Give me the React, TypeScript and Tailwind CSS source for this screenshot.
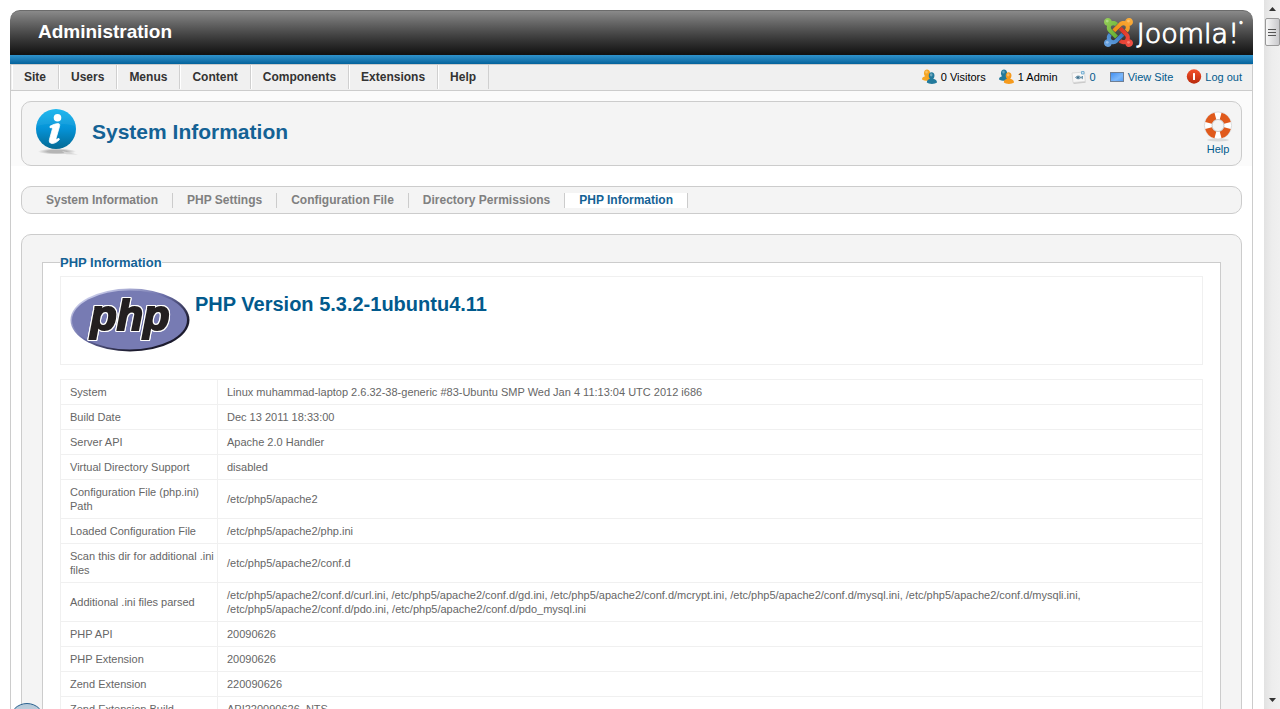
import type { ReactNode } from 'react'

const menuItems = ['Site', 'Users', 'Menus', 'Content', 'Components', 'Extensions', 'Help']

const tabs = [
  'System Information',
  'PHP Settings',
  'Configuration File',
  'Directory Permissions',
  'PHP Information',
]

const phpInfo = [
  ['System', 'Linux muhammad-laptop 2.6.32-38-generic #83-Ubuntu SMP Wed Jan 4 11:13:04 UTC 2012 i686'],
  ['Build Date', 'Dec 13 2011 18:33:00'],
  ['Server API', 'Apache 2.0 Handler'],
  ['Virtual Directory Support', 'disabled'],
  ['Configuration File (php.ini) Path', '/etc/php5/apache2'],
  ['Loaded Configuration File', '/etc/php5/apache2/php.ini'],
  ['Scan this dir for additional .ini files', '/etc/php5/apache2/conf.d'],
  [
    'Additional .ini files parsed',
    '/etc/php5/apache2/conf.d/curl.ini, /etc/php5/apache2/conf.d/gd.ini, /etc/php5/apache2/conf.d/mcrypt.ini, /etc/php5/apache2/conf.d/mysql.ini, /etc/php5/apache2/conf.d/mysqli.ini, /etc/php5/apache2/conf.d/pdo.ini, /etc/php5/apache2/conf.d/pdo_mysql.ini',
  ],
  ['PHP API', '20090626'],
  ['PHP Extension', '20090626'],
  ['Zend Extension', '220090626'],
  ['Zend Extension Build', 'API220090626, NTS'],
]

function JoomlaMark() {
  return (
    <svg viewBox="0 32 448 448" className="size-[29px]" aria-hidden="true">
      <defs>
        <linearGradient id="jGreen" x1="0" y1="0" x2="1" y2="1">
          <stop offset="0" stopColor="#9ad05c" />
          <stop offset="1" stopColor="#5fae2e" />
        </linearGradient>
        <linearGradient id="jOrange" x1="1" y1="0" x2="0" y2="1">
          <stop offset="0" stopColor="#fbb040" />
          <stop offset="1" stopColor="#f08a10" />
        </linearGradient>
        <linearGradient id="jRed" x1="0" y1="0" x2="1" y2="1">
          <stop offset="0" stopColor="#d9301f" />
          <stop offset="1" stopColor="#f4554a" />
        </linearGradient>
        <linearGradient id="jBlue" x1="1" y1="0" x2="0" y2="1">
          <stop offset="0" stopColor="#2f74bd" />
          <stop offset="1" stopColor="#6fa8e4" />
        </linearGradient>
      </defs>
      <path
        fill="url(#jBlue)"
        d="M312.1 307.6l-44-44.3c-87 86.4-50.4 50.4-99.7 99.8-14.3 14.3-37.6 14.3-51.9 0-13.1-13.4-16.9-35.3 3.2-55.4l-44-44.3c-30.2 30.2-38 65.2-29.5 98.3-26.7 6-46.2 29.9-46.2 58.2C0 453.2 26.8 480 59.8 480c28.6 0 52.5-19.8 58.6-46.7 32.7 8.2 68.5-.6 94.2-26 32.1-32 12.2-12.4 99.5-99.7z"
      />
      <path
        fill="url(#jRed)"
        d="M396.4 360.7c8.2-32.7-.9-68.5-26.3-93.9-11.8-12.2 5 4.7-99.5-99.7l-44.3 44.3 99.7 99.7c14.3 14.3 14.3 37.6 0 51.9-12.8 12.8-35 17-55.4-3.5l-44 44.3c27.6 30.2 68 38.8 102.7 28 5.5 27.4 29.7 48.1 58.9 48.1 33 0 59.8-26.8 59.8-60.1 0-30.2-22.5-55-51.6-59.1z"
      />
      <path
        fill="url(#jOrange)"
        d="M130.1 208.5l44.3 44.3c10-10 89.7-89.7 99.7-99.8 14.3-14.3 37.6-14.3 51.9 0 12.8 12.8 17 35-3.5 55.4l44 44.3c31.2-31.2 38.5-67.6 28.9-101.2 29.2-4.1 51.9-29.2 51.9-59.5 0-33.2-26.8-60.1-59.8-60.1-30.3 0-55.4 22.5-59.5 51.6-33.8-9.9-71.7-1.5-98.3 25.1-18.3 19.1-71.1 71.5-99.6 99.9z"
      />
      <path
        fill="url(#jGreen)"
        d="M.6 92.1C.6 58.8 27.4 32 60.4 32c30 0 54.5 21.9 59.2 50.2 32.6-7.6 67.1.6 96.5 30l-44.3 44.3c-20.5-20.5-42.6-16.3-55.4-3.5-14.3 14.3-14.3 37.9 0 52.2l99.5 99.5-44 44.3c-87.7-87.2-49.7-49.7-99.8-99.7-26.8-26.5-35-64.8-24.8-98.9C20.4 144.6.6 120.7.6 92.1z"
      />
      <circle cx="50" cy="80" r="22" fill="#c9ecb0" opacity="0.5" />
      <circle cx="378" cy="80" r="22" fill="#ffdc9c" opacity="0.5" />
      <circle cx="50" cy="408" r="22" fill="#cfe3fa" opacity="0.5" />
      <circle cx="378" cy="408" r="22" fill="#ffb0a8" opacity="0.5" />
    </svg>
  )
}

function UsersIcon({ back, front }: { back: string; front: string }) {
  return (
    <svg viewBox="0 0 16 16" className="size-4" aria-hidden="true">
      <path fill={back} d="M0 10.500C0 8 1.500 7.800 3 7.200 1.200 5.300 1.700.5 5 .5s4 4.800 2.200 6.700C9 8 10 8.500 10 11 8 12.200 2 12.200 0 10.500z" />
      <path fill={front} d="M4.800 13.500c0-2.600 1.600-3 3.200-3.700-2-1.900-1.700-6.500 1.600-6.500s3.700 4.600 1.600 6.500c2.200.7 3.800 1.100 3.800 3.700-2 1.900-8.200 1.900-10.200 0z" />
      <ellipse cx="9.200" cy="5.800" rx="1.300" ry="1.600" fill="#fff" opacity="0.35" />
      <ellipse cx="4.500" cy="3" rx="1.300" ry="1.500" fill="#fff" opacity="0.3" />
    </svg>
  )
}

function MailIcon() {
  return (
    <svg viewBox="0 0 16 16" className="size-4" aria-hidden="true">
      <path d="M2.500 14.200l12-1.200" stroke="#c9c9c9" strokeWidth="1.400" />
      <path d="M1 4l12.500-1 .8 9.500L2 13.500z" fill="#f7f7f7" stroke="#d4d4d4" strokeWidth="0.800" />
      <path d="M4.500 8.500c1.500-2 4-2 5.500 0-1.500 1.800-4 1.800-5.500 0zM10 8.500l1.500-1.500v2.800z" fill="#8fb0c4" stroke="#4f7f9c" strokeWidth="0.700" />
      <circle cx="7" cy="8.500" r="0.900" fill="#33617d" />
      <path d="M10.500 2.500h2.500v2.500h-2.500z" fill="#cfe6f5" stroke="#64a4cc" strokeWidth="0.800" />
    </svg>
  )
}

function ScreenIcon() {
  return (
    <svg viewBox="0 0 16 16" className="size-4" aria-hidden="true">
      <defs>
        <linearGradient id="screen" x1="0" y1="0" x2="1" y2="1">
          <stop offset="0" stopColor="#3f8df0" />
          <stop offset="0.600" stopColor="#7db8fa" />
          <stop offset="1" stopColor="#4e9bf5" />
        </linearGradient>
      </defs>
      <rect x="1.500" y="3.500" width="13" height="9" fill="url(#screen)" stroke="#6f7f94" />
    </svg>
  )
}

function LogoutIcon() {
  return (
    <svg viewBox="0 0 16 16" className="size-4" aria-hidden="true">
      <defs>
        <linearGradient id="logout" x1="0" y1="0" x2="0" y2="1">
          <stop offset="0" stopColor="#f4502a" />
          <stop offset="1" stopColor="#b82a0c" />
        </linearGradient>
      </defs>
      <circle cx="8" cy="7.500" r="7.200" fill="url(#logout)" />
      <rect x="7" y="4" width="2" height="7" rx="0.500" fill="#fff" />
    </svg>
  )
}

function InfoIcon() {
  return (
    <svg viewBox="0 0 48 48" className="size-12 shrink-0" aria-hidden="true">
      <defs>
        <linearGradient id="info" x1="0" y1="0" x2="0" y2="1">
          <stop offset="0" stopColor="#12b4ee" />
          <stop offset="0.500" stopColor="#0592d6" />
          <stop offset="1" stopColor="#046a94" />
        </linearGradient>
        <radialGradient id="infoShade">
          <stop offset="0.500" stopColor="#b5b5b5" />
          <stop offset="1" stopColor="#b5b5b5" stopOpacity="0" />
        </radialGradient>
      </defs>
      <ellipse cx="23" cy="43.500" rx="19" ry="3" fill="url(#infoShade)" />
      <path d="M28 43l16 3.500-12-.3z" fill="#d6d6d6" />
      <circle cx="22" cy="21" r="20" fill="url(#info)" />
      <path d="M3 18a19 19 0 0 1 38 0c-10-3-28-3-38 0z" fill="#fff" opacity="0.060" />
      <circle cx="23.500" cy="9.800" r="3.800" fill="#fff" />
      <path
        fill="#fff"
        stroke="#fff"
        strokeWidth="0.800"
        d="M16 18.200c2.500-1.400 6.500-2.800 8.300-2.600 1.500.2 1.600 1.300 1.200 2.800l-3.300 11.500c-.4 1.400 0 1.700 1 1.200l1.700-.8.500 1.300c-2 2.100-4.700 4-7.300 3.900-2.700-.1-3.200-2-2.600-4.200l2.800-10.100c.4-1.400-.3-1.600-2.300-1.500z"
      />
    </svg>
  )
}

function LifebuoyIcon() {
  return (
    <svg viewBox="0 0 32 32" className="size-8" aria-hidden="true">
      <ellipse cx="16" cy="30" rx="11" ry="1.500" fill="#d9d9d9" />
      <circle cx="16" cy="15.500" r="9.800" fill="none" stroke="#fff" strokeWidth="7.500" />
      <circle cx="16" cy="15.500" r="13.600" fill="none" stroke="#d3d3d3" strokeWidth="0.800" />
      <circle
        cx="16"
        cy="15.500"
        r="9.800"
        fill="none"
        stroke="#e05a1c"
        strokeWidth="7"
        pathLength="80"
        strokeDasharray="13 7"
        strokeDashoffset="-3.500"
      />
      <circle cx="16" cy="15.500" r="6" fill="none" stroke="#b9b9b9" strokeWidth="0.800" />
    </svg>
  )
}

function PhpLogo() {
  return (
    <svg viewBox="0 0 120 66" className="h-[66px] w-[120px] shrink-0" role="img" aria-label="PHP logo">
      <defs>
        <linearGradient id="phpEdge" x1="0" y1="0" x2="1" y2="1">
          <stop offset="0.150" stopColor="#c4c7e6" />
          <stop offset="0.450" stopColor="#6a6ea8" />
          <stop offset="0.750" stopColor="#1c1b2e" />
        </linearGradient>
      </defs>
      <ellipse cx="60" cy="33" rx="59.500" ry="31.500" fill="url(#phpEdge)" />
      <ellipse cx="59.500" cy="33" rx="57.500" ry="29.500" fill="#777bb3" />
      <text
        x="60"
        y="43"
        textAnchor="middle"
        fill="#231f20"
        stroke="#231f20"
        strokeWidth="2"
        className="font-['Liberation_Sans',Arial,sans-serif] text-[43px] font-bold italic [filter:drop-shadow(1px_0_#fff)_drop-shadow(-1px_0_#fff)_drop-shadow(0_1px_#fff)_drop-shadow(0_-1px_#fff)]"
      >
        php
      </text>
    </svg>
  )
}

function StatusItem({ icon, children, href }: { icon: ReactNode; children: ReactNode; href?: string }) {
  if (!href) {
    return (
      <span className="flex items-center gap-[3px] text-black">
        {icon}
        {children}
      </span>
    )
  }
  return (
    <a href={href} className="flex items-center gap-[3px] text-[#025a8d]">
      {icon}
      {children}
    </a>
  )
}

function ScrollBar() {
  return (
    <div className="flex w-4 shrink-0 flex-col items-center bg-linear-to-r from-[#e2e2e2] via-[#ededed] to-[#f0f0f0]">
      <div className="flex h-[18px] items-center">
        <svg viewBox="0 0 7 4" className="h-1 w-[7px]" aria-hidden="true">
          <path d="M0 4L3.500 0 7 4z" fill="#333" />
        </svg>
      </div>
      <div className="flex h-7 w-[15px] flex-col items-center justify-center gap-0.5 rounded-xs border border-[#999] bg-linear-to-r from-[#f7f7f7] to-[#c9c9cc]">
        <span className="h-px w-2 bg-[#555]" />
        <span className="h-px w-2 bg-[#555]" />
        <span className="h-px w-2 bg-[#555]" />
      </div>
      <div className="mt-auto flex h-[18px] items-center">
        <svg viewBox="0 0 7 4" className="h-1 w-[7px]" aria-hidden="true">
          <path d="M0 0h7L3.500 4z" fill="#333" />
        </svg>
      </div>
    </div>
  )
}

export default function App() {
  return (
    <div className="relative flex h-screen overflow-hidden bg-white font-['Liberation_Sans',Arial,sans-serif] text-[11px] leading-[14px] text-[#666]">
      <div className="min-w-0 flex-1 overflow-hidden pt-[10px] pr-[11px] pl-[10px]">
        <header>
          <div className="flex h-[45px] items-center justify-between rounded-t-[10px] border-t border-[#6b6b6b] bg-linear-to-b from-[#8a8a8a] to-[#111] pr-[10px] pb-0.5 pl-7">
            <h1 className="text-[19px] leading-6 font-bold text-white">Administration</h1>
            <div className="flex items-center gap-1 text-white">
              <JoomlaMark />
              <span className="flex items-start pt-[3px] font-['DejaVu_Sans','Inter',sans-serif] text-[27px] leading-7 font-extralight [-webkit-text-stroke:1px_#fff]">
                Joomla!
                <span className="text-[8px] leading-3">°</span>
              </span>
            </div>
          </div>
          <div className="h-[9px] bg-linear-to-b from-[#2f93cc] to-[#02639c]" />
        </header>

        <div className="border-x border-[#ccc]">
          <div className="flex items-center justify-between border-y border-[#ccc] bg-[#f0f0f0] pr-[10px] pb-px">
            <nav className="flex pl-px">
              {menuItems.map(item => (
                <a
                  key={item}
                  href="#"
                  className="border-r border-[#d0d0d0] px-3 py-1 text-xs leading-4 font-bold text-[#333] shadow-[inset_1px_0_#fff]"
                >
                  {item}
                </a>
              ))}
            </nav>
            <div className="flex items-center gap-[13px]">
              <StatusItem icon={<UsersIcon back="#f5a623" front="#237a9c" />}>0 Visitors</StatusItem>
              <StatusItem icon={<UsersIcon back="#237a9c" front="#f59a1c" />}>1 Admin</StatusItem>
              <StatusItem icon={<MailIcon />} href="#">0</StatusItem>
              <StatusItem icon={<ScreenIcon />} href="#">View Site</StatusItem>
              <StatusItem icon={<LogoutIcon />} href="#">Log out</StatusItem>
            </div>
          </div>

          <div className="bg-[#fbfbfb] px-[10px] pt-[10px]">
            <div className="flex items-center justify-between rounded-[10px] border border-[#ccc] bg-[#f4f4f4] pt-1.5 pr-[7px] pb-[9px] pl-3">
              <div className="flex items-center gap-[10px]">
                <InfoIcon />
                <h2 className="text-[21px] leading-6 font-bold text-[#146295]">System Information</h2>
              </div>
              <a href="#" className="flex flex-col items-center pt-0.5 text-[#025a8d]">
                <LifebuoyIcon />
                Help
              </a>
            </div>
          </div>

          <main className="px-[10px] pt-5">
            <nav className="flex rounded-[10px] border border-[#ccc] bg-[#f4f4f4] pt-1.5 pb-[5px] pl-[10px]">
              {tabs.map(tab => (
                <a
                  key={tab}
                  href="#"
                  className={
                    tab === 'PHP Information'
                      ? 'border-r border-[#ccc] bg-white px-[14px] text-xs leading-[15px] font-bold text-[#146295]'
                      : 'border-r border-[#ccc] px-[14px] text-xs leading-[15px] font-bold text-[#808080]'
                  }
                >
                  {tab}
                </a>
              ))}
            </nav>

            <section className="mt-5 rounded-[10px] border border-[#ccc] bg-[#f4f4f4] px-5 pt-[19px] pb-5">
              <fieldset className="border border-[#ccc] bg-white px-[17px] pt-[5px] pb-4">
                <legend className="text-[13px] leading-[17px] font-bold text-[#146295]">PHP Information</legend>
                <div className="flex gap-[5px] border border-[#f0f0f0] px-[9px] pt-[10px] pb-[11px]">
                  <PhpLogo />
                  <h3 className="pt-[5px] text-xl leading-6 font-bold text-[#025a8d]">PHP Version 5.3.2-1ubuntu4.11</h3>
                </div>
                <table className="mt-[14px] w-full border-collapse">
                  <tbody>
                    {phpInfo.map(([name, value]) => (
                      <tr key={name}>
                        <th
                          scope="row"
                          className="w-[157px] border border-[#f0f0f0] py-[5px] pl-[9px] text-left align-middle font-normal"
                        >
                          {name}
                        </th>
                        <td className="border border-[#f0f0f0] px-[9px] py-[5px] align-middle">{value}</td>
                      </tr>
                    ))}
                  </tbody>
                </table>
              </fieldset>
            </section>
          </main>
        </div>
      </div>

      <ScrollBar />

      <button
        type="button"
        aria-label="Status"
        className="absolute -bottom-[30px] left-[9px] size-9 rounded-full border border-[#2c6390] bg-linear-to-b from-[#b4c8d8] to-[#dfe8ef]"
      />
    </div>
  )
}
